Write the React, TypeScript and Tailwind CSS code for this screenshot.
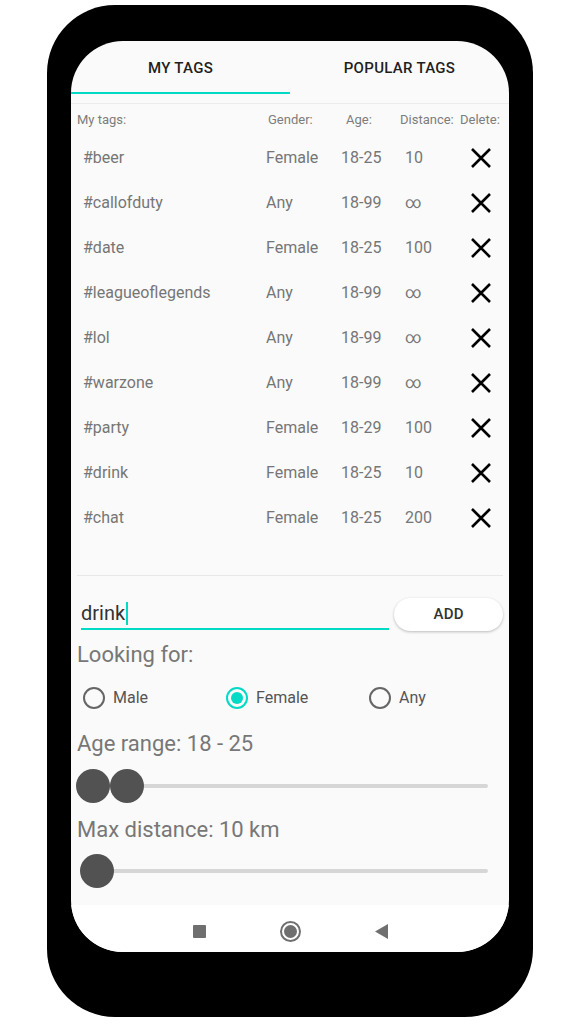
import { useState } from "react";

const tags = [
  { tag: "#beer", gender: "Female", age: "18-25", dist: "10" },
  { tag: "#callofduty", gender: "Any", age: "18-99", dist: "∞" },
  { tag: "#date", gender: "Female", age: "18-25", dist: "100" },
  { tag: "#leagueoflegends", gender: "Any", age: "18-99", dist: "∞" },
  { tag: "#lol", gender: "Any", age: "18-99", dist: "∞" },
  { tag: "#warzone", gender: "Any", age: "18-99", dist: "∞" },
  { tag: "#party", gender: "Female", age: "18-29", dist: "100" },
  { tag: "#drink", gender: "Female", age: "18-25", dist: "10" },
  { tag: "#chat", gender: "Female", age: "18-25", dist: "200" },
];

function CloseIcon() {
  return (
    <svg width="22" height="22" viewBox="0 0 22 22">
      <path d="M2 2 L20 20 M20 2 L2 20" stroke="#000" strokeWidth="2.6" fill="none" />
    </svg>
  );
}

function Radio({ label, checked }: { label: string; checked?: boolean }) {
  return (
    <div className="flex items-center w-[143px] shrink-0">
      <div
        className={
          checked
            ? "w-[22px] h-[22px] shrink-0 rounded-full border-2 border-[#03dac5] flex items-center justify-center"
            : "w-[22px] h-[22px] shrink-0 rounded-full border-2 border-[#666666]"
        }
      >
        {checked && <div className="w-[12px] h-[12px] rounded-full bg-[#03dac5]" />}
      </div>
      <span className="ml-[8px] text-[16px] text-[#555555]">{label}</span>
    </div>
  );
}

export default function App() {
  const [text, setText] = useState("drink");

  return (
    <div className="w-[585px] h-[1024px] bg-white pt-[5px] pl-[47px] font-['Roboto',sans-serif]">
      <div className="w-[486px] h-[1012px] rounded-[68px] bg-black pt-[36px] px-[24px]">
        <div className="w-[438px] h-[911px] rounded-[52px] overflow-hidden bg-[#fafafa] flex flex-col">
          {/* tabs */}
          <div className="border-b border-[#ececec]">
            <div className="flex h-[51px] pt-[3px] items-center text-[15px] font-medium text-[#1f1f1f] tracking-[0.3px]">
              <div className="w-1/2 text-center">MY TAGS</div>
              <div className="w-1/2 text-center">POPULAR TAGS</div>
            </div>
            <div className="w-1/2 h-[2px] bg-[#03dac5]" />
            <div className="h-[9px]" />
          </div>

          {/* header */}
          <div className="flex h-[31px] items-center pl-[6px] text-[13px] text-[#7d7d7d] whitespace-nowrap">
            <span className="w-[191px]">My tags:</span>
            <span className="w-[78px]">Gender:</span>
            <span className="w-[54px]">Age:</span>
            <span className="w-[60px]">Distance:</span>
            <span>Delete:</span>
          </div>

          {tags.map((t) => (
            <div key={t.tag} className="flex h-[45px] items-center pl-[12px] text-[16px] text-[#767676]">
              <span className="w-[183px]">{t.tag}</span>
              <span className="w-[75px]">{t.gender}</span>
              <span className="w-[64px]">{t.age}</span>
              <span className="w-[64px]">{t.dist}</span>
              <span className="w-[24px] flex justify-center">
                <CloseIcon />
              </span>
            </div>
          ))}

          <div className="h-[35px]" />

          {/* add tag form */}
          <div className="px-[6px]">
            <div className="h-px bg-[#e8e8e8]" />
            <div className="flex items-start mt-[22px]">
              <div className="ml-[4px] w-[309px] h-[32px] border-b-2 border-[#03dac5] flex items-center">
                <span className="text-[20px] text-[#333333] leading-[24px]">{text}</span>
                <span className="w-[2px] h-[23px] bg-[#03dac5] ml-px" />
              </div>
              <button
                onClick={() => setText("")}
                className="ml-[5px] w-[109px] h-[33px] rounded-full bg-white shadow-[0_1px_3px_rgba(0,0,0,0.25)] text-[15px] font-medium text-[#333333] tracking-[0.3px]"
              >
                ADD
              </button>
            </div>

            <div className="mt-[12px] text-[22px] leading-[24px] text-[#777777]">Looking for:</div>

            <div className="mt-[19px] flex pl-[6px]">
              <Radio label="Male" />
              <Radio label="Female" checked />
              <Radio label="Any" />
            </div>

            <div className="mt-[22px] text-[22px] leading-[24px] text-[#777777]">Age range: 18 - 25</div>

            <div className="mt-[13px] relative h-[34px] flex items-center">
              <div className="ml-[16px] w-[395px] h-[4px] bg-[#d6d6d6] rounded-full" />
              <div className="absolute left-[-1px] top-0 w-[34px] h-[34px] rounded-full bg-[#525252]" />
              <div className="absolute left-[33px] top-0 w-[34px] h-[34px] rounded-full bg-[#525252]" />
            </div>

            <div className="mt-[15px] text-[22px] leading-[24px] text-[#777777]">Max distance: 10 km</div>

            <div className="mt-[12px] relative h-[34px] flex items-center">
              <div className="ml-[16px] w-[395px] h-[4px] bg-[#d6d6d6] rounded-full" />
              <div className="absolute left-[3px] top-0 w-[34px] h-[34px] rounded-full bg-[#525252]" />
            </div>
          </div>

          <div className="flex-1" />

          {/* nav bar */}
          <div className="h-[47px] bg-white flex items-center justify-center gap-[74px] pt-[5px]">
            <div className="w-[13px] h-[13px] bg-[#6f6f6f] rounded-[1px]" />
            <div className="w-[21px] h-[21px] rounded-full border-2 border-[#6f6f6f] flex items-center justify-center">
              <div className="w-[13px] h-[13px] rounded-full bg-[#6f6f6f]" />
            </div>
            <svg width="13" height="15" viewBox="0 0 13 15">
              <path d="M0 7.5 L13 0 L13 15 Z" fill="#6f6f6f" />
            </svg>
          </div>
        </div>
      </div>
    </div>
  );
}
